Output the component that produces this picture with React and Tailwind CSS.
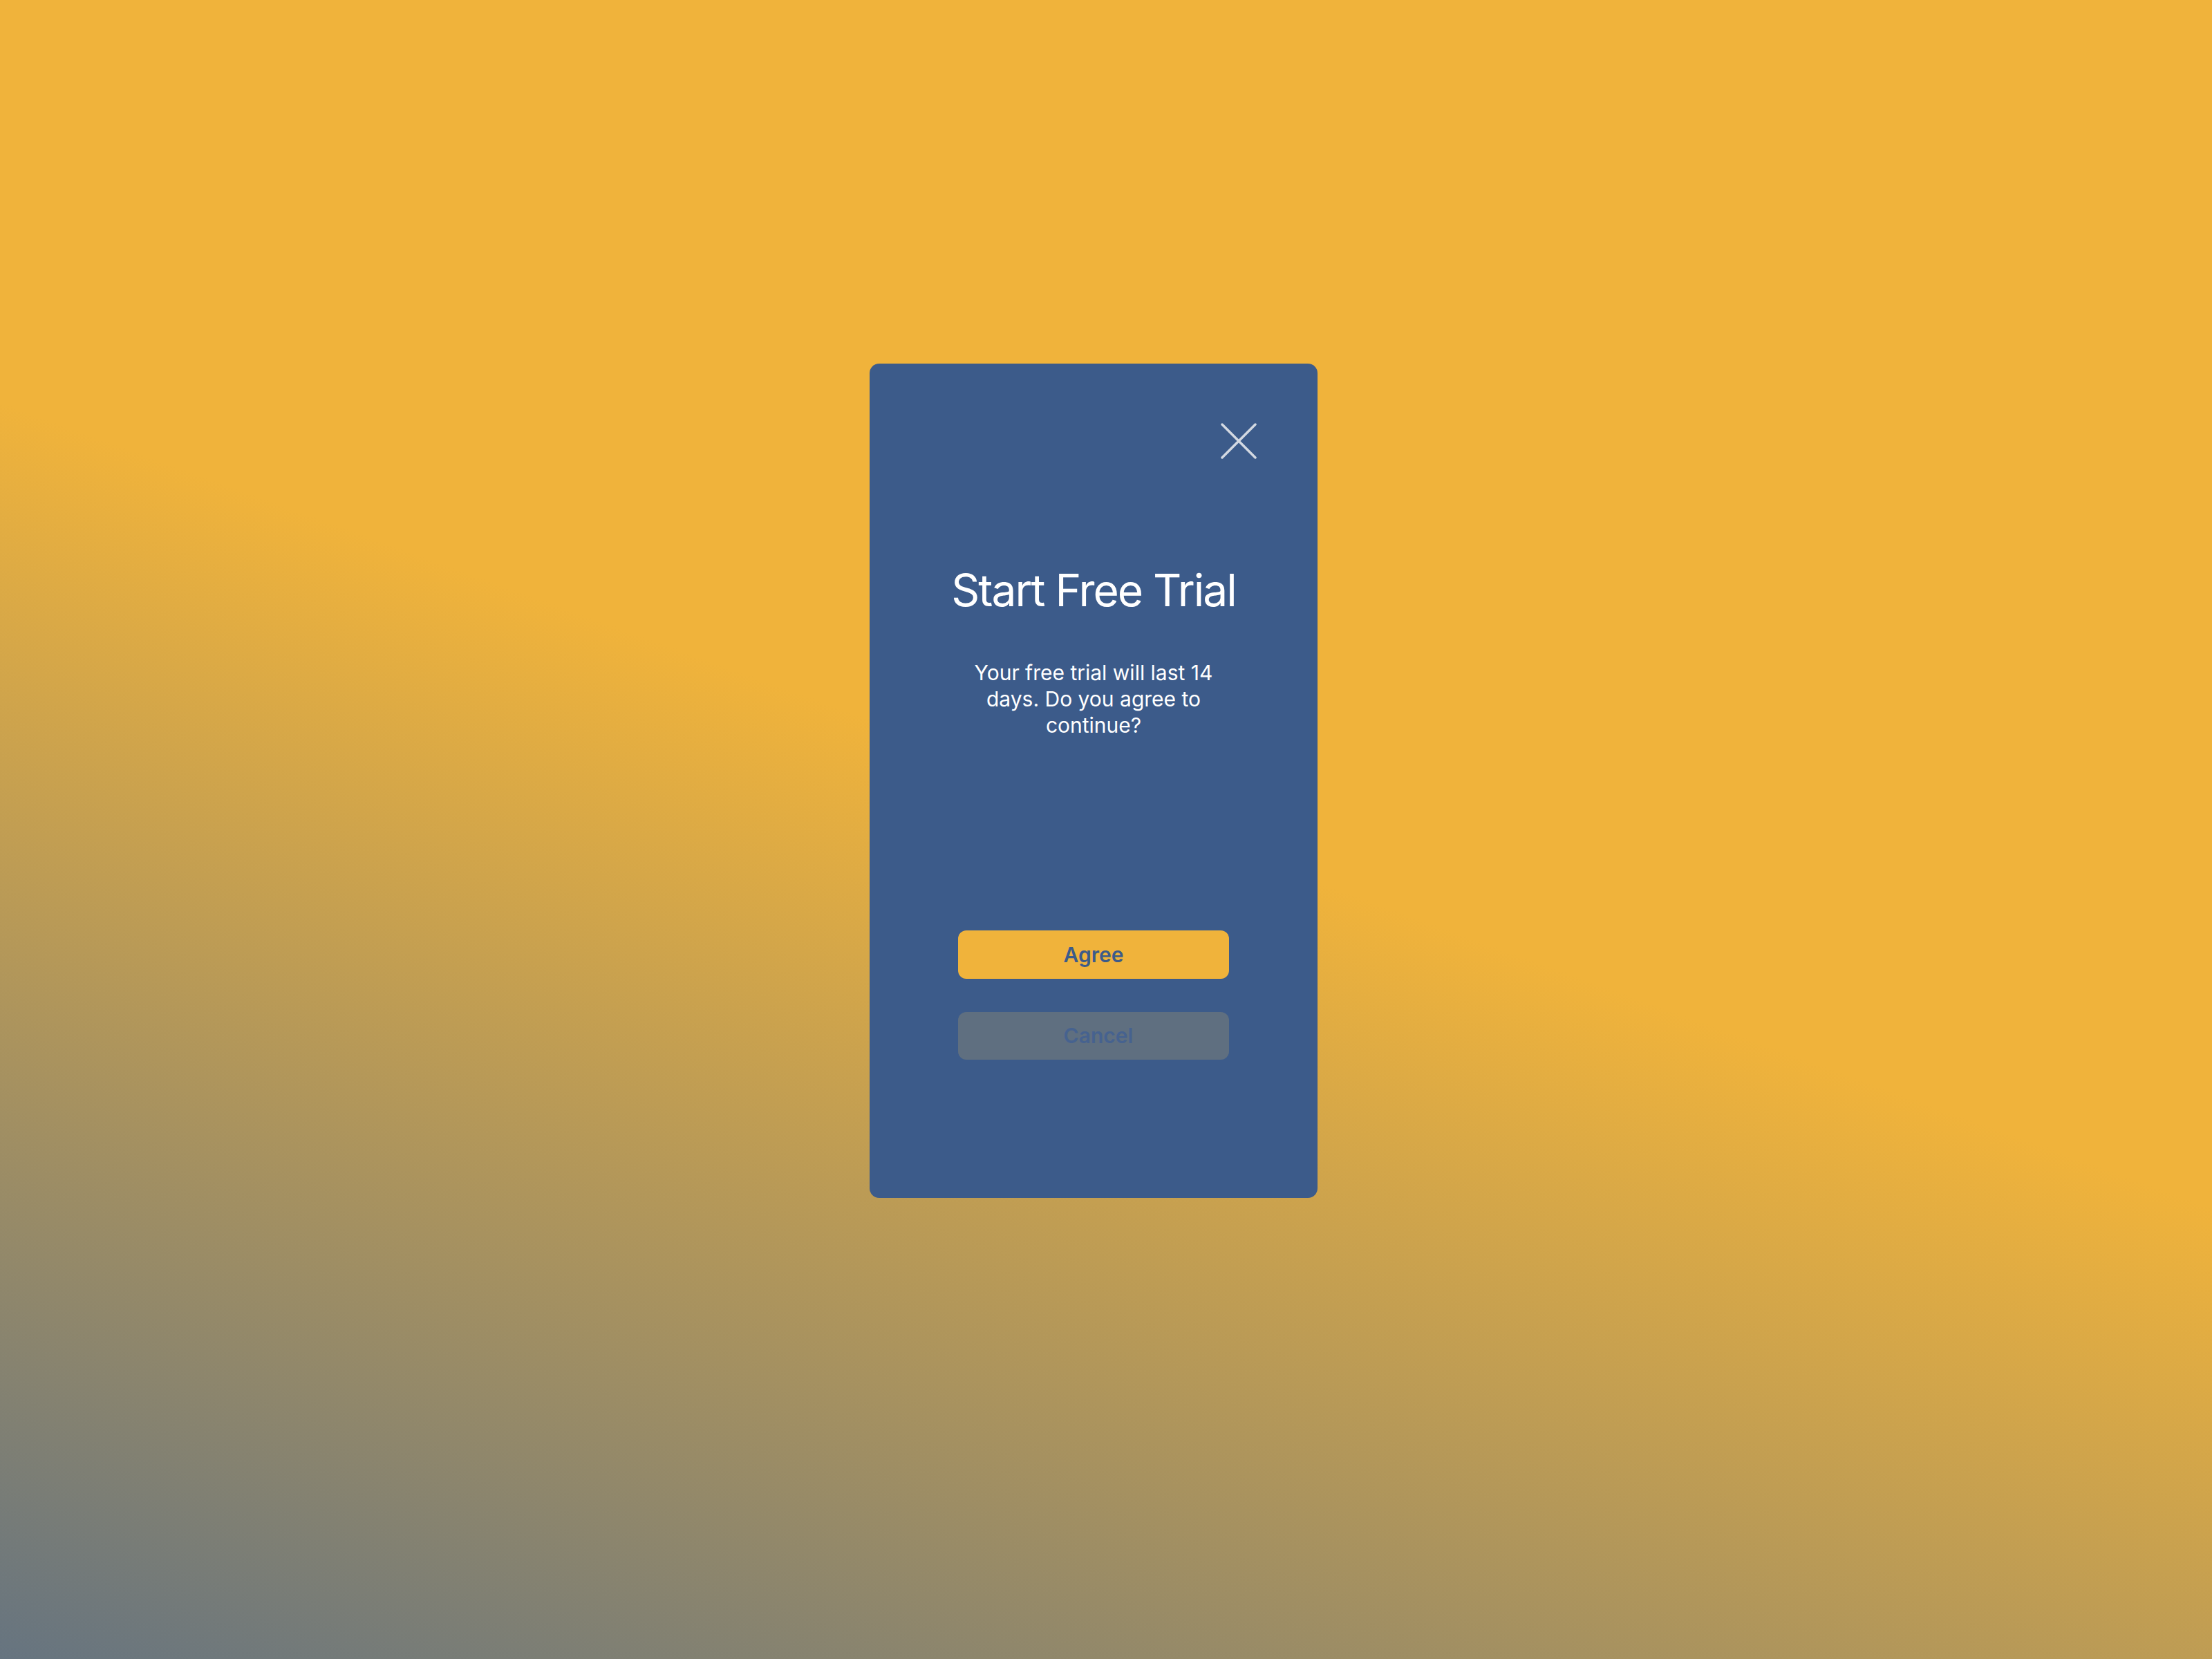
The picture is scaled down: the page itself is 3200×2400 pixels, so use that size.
const CloseIcon = () => (
  <svg width="52" height="52" viewBox="0 0 52 52" fill="none">
    <path
      d="M2 2L50 50M50 2L2 50"
      stroke="#d3d9e2"
      strokeWidth="3.5"
      strokeLinecap="round"
    />
  </svg>
);

const TrialDialog = () => {
  return (
    <div className="flex h-[1207px] w-[648px] flex-col items-center rounded-[14px] bg-[#3c5b8a] font-['Inter',sans-serif]">
      <div className="flex w-full justify-end pr-[88px] pt-[86px]">
        <button type="button" aria-label="Close" className="block">
          <CloseIcon />
        </button>
      </div>

      <h1 className="mt-[158px] text-[64px] font-normal leading-[64px] tracking-[-2px] text-white">
        Start Free Trial
      </h1>

      <p className="mt-[68px] w-[360px] text-center text-[30px] leading-[38px] text-white">
        Your free trial will last 14 days. Do you agree to continue?
      </p>

      <div className="mt-[278px] flex w-[392px] flex-col gap-[48px]">
        <button
          type="button"
          className="h-[70px] w-full rounded-[12px] bg-[#f0b33b] text-[30px] font-semibold text-[#3c5b8a]"
        >
          Agree
        </button>
        <button
          type="button"
          className="h-[69px] w-full rounded-[12px] bg-[#5f6f80] pl-[14px] text-[30px] font-semibold text-[#46628f]"
        >
          Cancel
        </button>
      </div>
    </div>
  );
};

export default function App() {
  return (
    <div className="flex min-h-screen w-full items-center justify-center bg-[linear-gradient(20deg,#667480_0%,#f0b33b_51%)] pb-[141px] pr-[36px]">
      <TrialDialog />
    </div>
  );
}
